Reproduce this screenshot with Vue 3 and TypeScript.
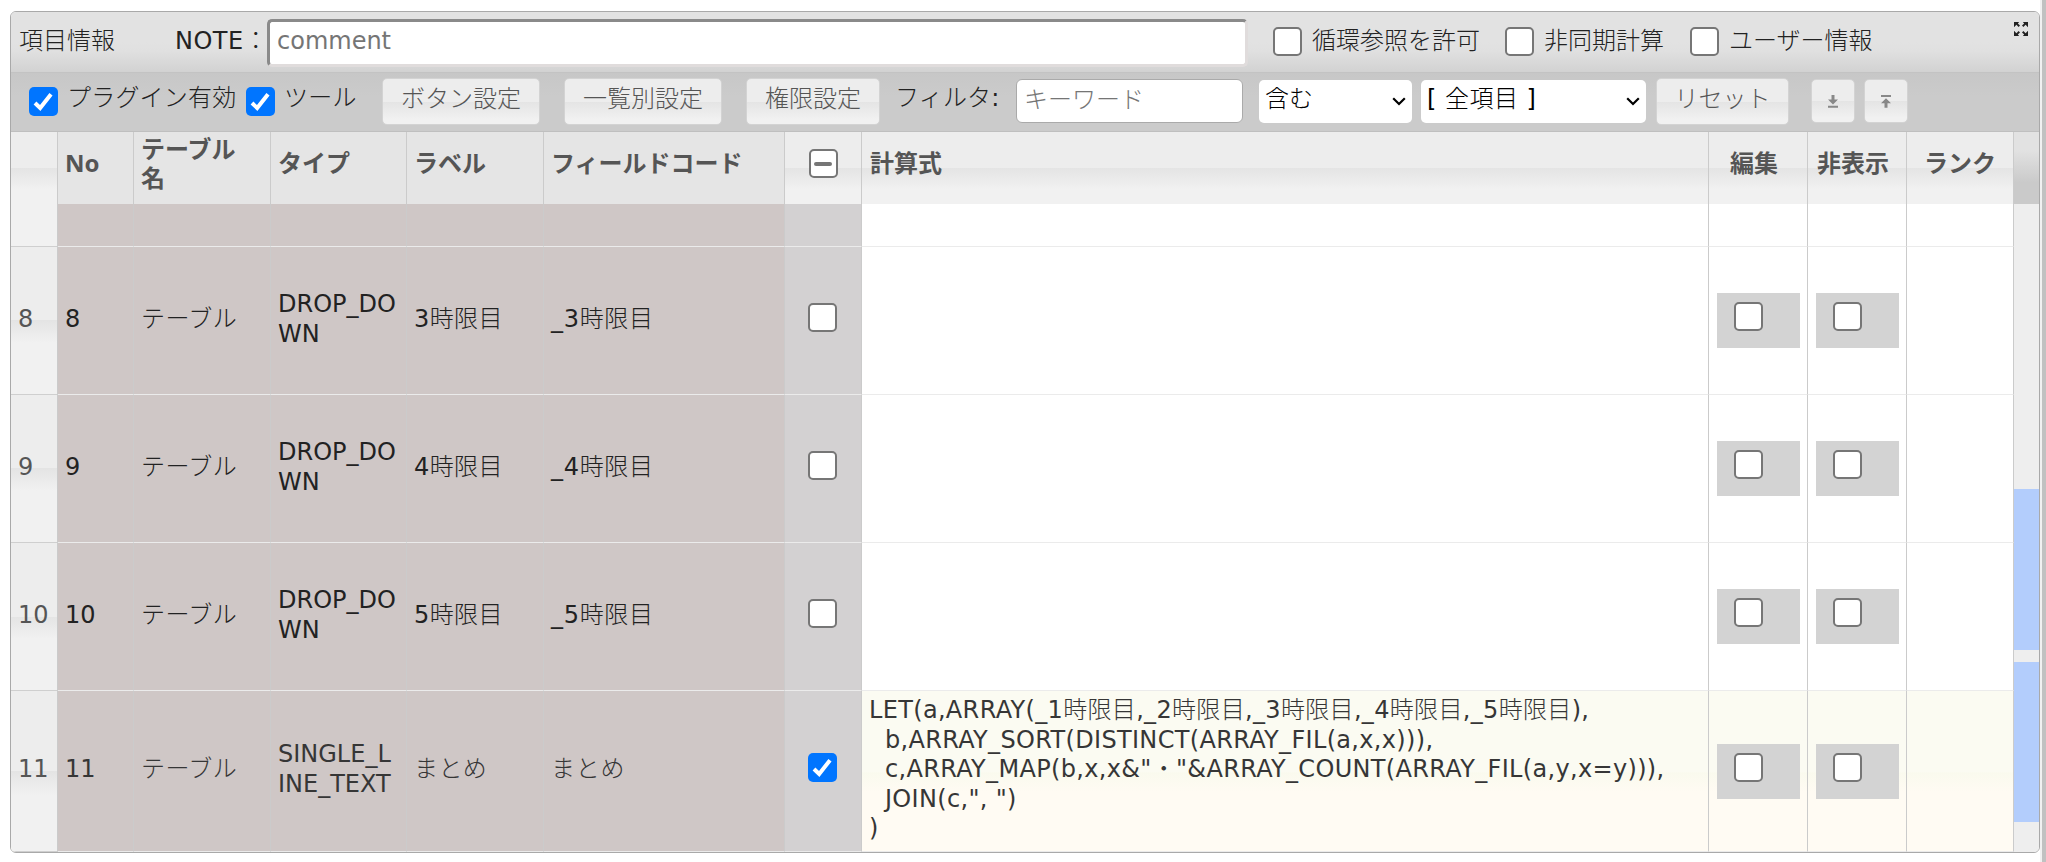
<script setup lang="ts">
interface Row {
  no: number
  type: string[]
  label: string
  checked: boolean
  formula: string[]
}

const formula = [
  'LET(a,ARRAY(_1時限目,_2時限目,_3時限目,_4時限目,_5時限目),',
  '  b,ARRAY_SORT(DISTINCT(ARRAY_FIL(a,x,x))),',
  '  c,ARRAY_MAP(b,x,x&"・"&ARRAY_COUNT(ARRAY_FIL(a,y,x=y))),',
  '  JOIN(c,", ")',
  ')',
]

const rows: Row[] = [
  { no: 8, type: ['DROP_DO', 'WN'], label: '3時限目', checked: false, formula: [] },
  { no: 9, type: ['DROP_DO', 'WN'], label: '4時限目', checked: false, formula: [] },
  { no: 10, type: ['DROP_DO', 'WN'], label: '5時限目', checked: false, formula: [] },
  { no: 11, type: ['SINGLE_L', 'INE_TEXT'], label: 'まとめ', checked: true, formula },
]

const fieldCode = (row: Row): string => (row.checked ? row.label : '_' + row.label)
const options = ['循環参照を許可', '非同期計算', 'ユーザー情報']
</script>

<template>
  <div class="page">
    <main class="panel">
      <header class="titlebar">
        <span class="title">項目情報</span>
        <label class="note-label">NOTE：</label>
        <input class="note" type="text" placeholder="comment" />
        <label v-for="(option, i) in options" :key="option" class="option" :class="'option-' + i">
          <span class="check"></span>
          <span class="option-text">{{ option }}</span>
        </label>
        <svg class="expand" viewBox="0 0 14 14">
          <path d="M0 0h5.200L3.800 1.400 6 3.600 4.600 5 2.400 2.800 0 5.200zM14 0v5.200l-2.400-2.400L9.400 5 8 3.600l2.200-2.200L8.800 0zM0 14V8.800l2.400 2.400L4.600 9 6 10.400l-2.200 2.200L5.200 14zM14 14H8.800l1.400-1.400L8 10.400 9.400 9l2.200 2.200L14 8.800z" />
        </svg>
      </header>

      <div class="toolbar">
        <span class="check on first"><svg viewBox="0 0 29 29"><path d="M6 16l5.200 5L22 7.200" /></svg></span>
        <span class="tool-text plugin">プラグイン有効</span>
        <span class="check on"><svg viewBox="0 0 29 29"><path d="M6 16l5.200 5L22 7.200" /></svg></span>
        <span class="tool-text tool">ツール</span>
        <button class="btn b1">ボタン設定</button>
        <button class="btn b2">一覧別設定</button>
        <button class="btn b3">権限設定</button>
        <span class="tool-text filter">フィルタ:</span>
        <input class="keyword" type="text" placeholder="キーワード" />
        <div class="select s1">
          <span>含む</span>
          <svg viewBox="0 0 14 9"><path d="M1.200 1.200L7 7l5.800-5.800" /></svg>
        </div>
        <div class="select s2">
          <span>[ 全項目 ]</span>
          <svg viewBox="0 0 14 9"><path d="M1.200 1.200L7 7l5.800-5.800" /></svg>
        </div>
        <button class="btn b4">リセット</button>
        <button class="btn icon i1">
          <svg viewBox="0 0 10 13"><path d="M3.500 0h3v4.500H10L5 9.500 0 4.500h3.500zM0 10.800h10v2H0z" /></svg>
        </button>
        <button class="btn icon i2">
          <svg viewBox="0 0 10 13"><path d="M3.500 12.800h3V8.300H10L5 3.300 0 8.300h3.500zM0 0h10v2H0z" /></svg>
        </button>
      </div>

      <div class="grid">
        <div class="row head">
          <div class="gutter"></div>
          <div class="locked">No</div>
          <div class="locked stacked"><span>テーブル</span><span>名</span></div>
          <div class="locked">タイプ</div>
          <div class="locked">ラベル</div>
          <div class="locked">フィールドコード</div>
          <div class="center"><span class="check mixed"></span></div>
          <div>計算式</div>
          <div class="center narrow">編集</div>
          <div class="center narrow">非表示</div>
          <div class="center">ランク</div>
        </div>
        <div class="row partial">
          <div class="gutter"></div>
          <div v-for="n in 5" :key="'l' + n" class="locked"></div>
          <div class="pick"></div>
          <div v-for="n in 4" :key="'d' + n"></div>
        </div>
        <div v-for="row in rows" :key="row.no" class="row data" :class="{ selected: row.checked }">
          <div class="gutter">{{ row.no }}</div>
          <div class="locked number">{{ row.no }}</div>
          <div class="locked">テーブル</div>
          <div class="locked stacked">
            <span v-for="piece in row.type" :key="piece">{{ piece }}</span>
          </div>
          <div class="locked">{{ row.label }}</div>
          <div class="locked code">{{ fieldCode(row) }}</div>
          <div class="pick center">
            <span class="check" :class="{ on: row.checked }">
              <svg v-if="row.checked" viewBox="0 0 29 29"><path d="M6 16l5.200 5L22 7.200" /></svg>
            </span>
          </div>
          <div class="formula">
            <span v-for="line in row.formula" :key="line">{{ line }}</span>
          </div>
          <div class="flag"><span class="flag-box"><span class="check"></span></span></div>
          <div class="flag"><span class="flag-box"><span class="check"></span></span></div>
          <div></div>
        </div>
        <div class="scroll">
          <div class="corner"></div>
          <div class="track">
            <div class="thumb upper"></div>
            <div class="thumb lower"></div>
          </div>
        </div>
      </div>
    </main>
    <div class="page-scroll"></div>
  </div>
</template>

<style>
body {
  margin: 0;
  background: #fff;
}
</style>

<style scoped>
.page,
.page * {
  box-sizing: border-box;
}
.page {
  width: 2046px;
  height: 862px;
  display: flex;
  padding-left: 10px;
  overflow: hidden;
  font-family: "DejaVu Sans", "Noto Sans CJK JP Light", "Noto Sans CJK JP", sans-serif;
  font-size: 24px;
  font-weight: 400;
  line-height: 29.6px;
  color: #222;
}
.page-scroll {
  width: 6px;
  border-left: 2px solid #f1f1f1;
  background: #c1c1c1;
}
.panel {
  width: 2030px;
  height: 842px;
  margin-top: 11px;
  border: 1px solid #a9a9a9;
  border-radius: 6px;
  overflow: hidden;
}
.titlebar,
.toolbar {
  display: flex;
  align-items: center;
  white-space: nowrap;
}
.titlebar {
  height: 61px;
  position: relative;
  padding: 0 0 2px 8px;
  border-bottom: 1px solid #c3c3c3;
  background: linear-gradient(#e2e2e2 50%, #e0e0e0 65%, #d2d2d2);
}
.title,
.note-label,
.option-text {
  padding-top: 2px;
}
.title {
  width: 156px;
}
.note-label {
  width: 92px;
  letter-spacing: 0.5px;
}
.note {
  width: 981px;
  height: 48px;
  margin-top: 3px;
  padding: 0 7px 3px;
  border: 3px solid;
  border-color: #8a8a8a #e0dcdc #e0dcdc #8a8a8a;
  border-radius: 5px;
  background: #fff;
  font: inherit;
}
.note::placeholder,
.keyword::placeholder {
  color: #757575;
  opacity: 1;
}
.option {
  display: flex;
  align-items: center;
  gap: 10px;
}
.option-0 {
  width: 232px;
  margin-left: 25px;
}
.option-1 {
  width: 185px;
}
.check {
  flex: none;
  display: block;
  width: 29px;
  height: 29px;
  border: 2px solid #767676;
  border-radius: 5px;
  background: #fff;
}
.check.on {
  border: 0;
  background: #0075ff;
}
.check svg {
  display: block;
  width: 29px;
  height: 29px;
  fill: none;
  stroke: #fff;
  stroke-width: 4;
}
.check.mixed {
  display: flex;
  align-items: center;
  justify-content: center;
}
.check.mixed::after {
  content: "";
  width: 18px;
  height: 4px;
  border-radius: 2px;
  background: #767676;
}
.expand {
  position: absolute;
  top: 10px;
  right: 11px;
  width: 14px;
  height: 14px;
  fill: #222;
}
.toolbar {
  height: 59px;
  padding: 0 0 2px 18px;
  border-bottom: 1px solid #bfbfbf;
  background: linear-gradient(#c7c7c7, #cbcbcb 40%);
}
.tool-text {
  padding-bottom: 4px;
  letter-spacing: 0.2px;
}
.plugin {
  width: 179px;
  margin-left: 9px;
}
.tool {
  width: 98px;
  margin-left: 9px;
}
.btn {
  height: 47px;
  padding: 0 0 3px;
  border: 1px solid #d3d3d3;
  border-radius: 5px;
  background: linear-gradient(#ededed 50%, #e4e4e4 50%, #f1f1f1 90%);
  color: #555;
  font: inherit;
}
.b1,
.b2 {
  width: 158px;
  margin-right: 24px;
}
.b3 {
  width: 134px;
}
.filter {
  width: 121px;
  margin-left: 15px;
}
.keyword {
  width: 227px;
  height: 44px;
  padding: 0 7px 2px;
  border: 1px solid #aaa;
  border-radius: 6px;
  background: #fff;
  font: inherit;
}
.select {
  display: flex;
  align-items: center;
  justify-content: space-between;
  height: 43px;
  border-radius: 5px;
  background: #fff;
  color: #000;
}
.select span {
  padding-bottom: 2px;
}
.select svg {
  width: 14px;
  height: 9px;
  fill: none;
  stroke: #000;
  stroke-width: 2.2;
}
.s1 {
  width: 153px;
  margin-left: 16px;
  padding: 0 6px;
}
.s2 {
  width: 225px;
  margin-left: 9px;
  padding: 0 6px 0 6px;
  letter-spacing: 0.5px;
}
.b4 {
  width: 133px;
  margin-left: 10px;
}
.icon {
  display: flex;
  align-items: center;
  justify-content: center;
  width: 44px;
  height: 44px;
  padding: 0;
}
.icon svg {
  width: 10px;
  height: 13px;
  fill: #888;
}
.i1 {
  margin-left: 22px;
}
.i2 {
  margin-left: 9px;
}
.grid {
  display: grid;
  grid-template-columns: 2003px 25px;
  grid-template-rows: 72px 43px 148px 148px 148px 161px;
}
.row {
  grid-column: 1;
  display: grid;
  grid-template-columns: 47px 76px 137px 136px 137px 241px 77px 847px 99px 99px 107px;
}
.row > div {
  display: flex;
  align-items: center;
  min-width: 0;
  padding: 0 8px 2px;
  border-right: 1px solid #cbcbcb;
  border-bottom: 1px solid #ebebeb;
  white-space: nowrap;
}
.row > .center {
  justify-content: center;
}
.row > .gutter {
  padding-left: 7px;
  border-bottom-color: #cfcfcf;
  background: linear-gradient(#ededed 50%, #e4e4e4 50%, #f1f1f1 65%);
  color: #555;
}
.partial > .gutter {
  background: #f1f1f1;
}
.row > .locked {
  padding-left: 7px;
  border-right-color: #cbcbcb;
  background: #cfc7c6;
}
.data > .locked {
  letter-spacing: 0.4px;
}
.row > .stacked {
  flex-direction: column;
  align-items: flex-start;
  justify-content: center;
  letter-spacing: 0;
}
.row > .number {
  letter-spacing: 0;
}
.data > .code {
  letter-spacing: 0.7px;
}
.row > .pick {
  padding: 0 9px 7px 8px;
  background: #d3d1d2;
}
.row.head > div {
  padding-bottom: 9px;
  border-bottom: 0;
  background: linear-gradient(#ededed 50%, #e4e4e4 50%, #f1f1f1 80%);
  color: #555;
  font-family: "Noto Sans", "Noto Sans CJK JP", sans-serif;
  font-weight: 700;
  line-height: 28.500px;
}
.row.head > .locked {
  background: #e5e5e5;
}
.row.head > .narrow {
  padding-right: 16px;
}
.row > .formula {
  flex-direction: column;
  align-items: flex-start;
  justify-content: center;
  padding: 0 7px 2px;
  letter-spacing: 0.33px;
  white-space: pre;
}
.row > .flag {
  padding: 0 7px 0 8px;
}
.flag-box {
  width: 83px;
  height: 55px;
  padding: 9px 17px;
  background: #d3d3d3;
}
.selected {
  color: #363636;
  background: linear-gradient(#fbfbf2 50%, #fafaee 51%, #fffbf3 63%);
}
.scroll {
  grid-column: 2;
  grid-row: 1 / 7;
}
.corner {
  height: 72px;
  background: linear-gradient(#e2e2e2 25%, #cacaca 70%);
}
.track {
  height: 648px;
  padding-top: 285px;
  background: #eee;
}
.thumb {
  background: #b3cdfc;
}
.upper {
  height: 161px;
  margin-bottom: 12px;
}
.lower {
  height: 160px;
}
</style>
